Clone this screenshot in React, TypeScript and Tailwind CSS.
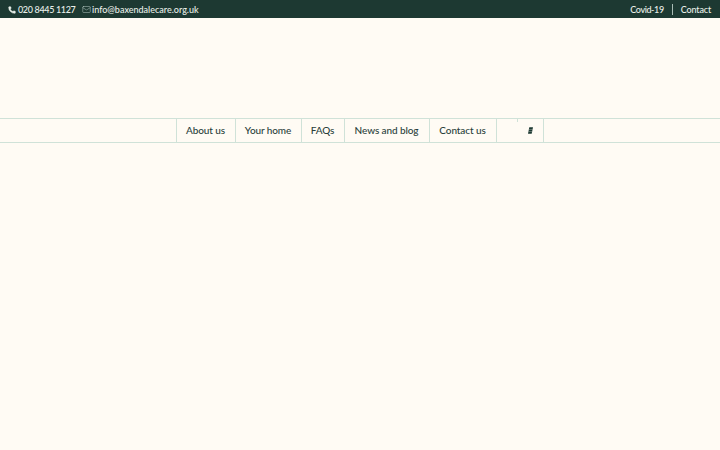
import { Mail, Phone } from "lucide-react";

const NAV_ITEMS = [
  { name: "About us", width: "w-[59px]" },
  { name: "Your home", width: "w-[66px]" },
  { name: "FAQs", width: "w-[43px]" },
  { name: "News and blog", width: "w-[85px]" },
  { name: "Contact us", width: "w-[67px]" },
];

export default function App() {
  return (
    <div className="min-h-[450px] bg-[#fffbf4] font-['Lato',sans-serif]">
      {/* Top bar */}
      <div className="flex h-[18px] items-center justify-between bg-[#1d3932] pl-2 pr-[9px] pt-px text-[9px] font-medium text-[#e9efe9]">
        <div className="flex items-center whitespace-nowrap">
          <Phone className="h-2 w-2 fill-current" strokeWidth={1.5} />
          <span className="ml-[2px] w-[57px] tracking-[-0.35px]">020 8445 1127</span>
          <Mail className="ml-[7px] h-[9px] w-[9px] text-[#a9bcb5]" strokeWidth={1.5} />
          <span className="ml-[1px]">info@baxendalecare.org.uk</span>
        </div>
        <div className="flex items-center whitespace-nowrap">
          <span className="tracking-[-0.4px]">Covid-19</span>
          <span className="mx-2 h-[11px] w-px bg-[#a9bcb5]" />
          <span className="tracking-[-0.15px]">Contact</span>
        </div>
      </div>

      {/* Logo space */}
      <div className="h-[100px]" />

      {/* Main nav */}
      <nav className="flex h-[25px] justify-center border-y border-[#d0e2d8] pr-px text-[10px] font-medium tracking-[-0.1px] text-[#2a3f3b]">
        <div className="flex border-l border-[#d0e2d8]">
          {NAV_ITEMS.map((item) => (
            <a key={item.name} className={`flex ${item.width} items-center justify-center border-r border-[#d0e2d8]`}>
              {item.name}
            </a>
          ))}
          <div className="relative flex w-[47px] items-center justify-end border-r border-[#d0e2d8] pr-[10px]">
            <span className="absolute left-[20px] top-0 h-[3px] w-px bg-[#d0e2d8]" />
            <svg viewBox="0 0 5 7" className="h-[7px] w-[5px] text-[#1d3932]">
              <path d="M1.3 0.3H5L3.7 6.7H0Z" fill="currentColor" />
              <path d="M1 2.5H4.5M0.7 4.5H4.2" stroke="#fffbf4" strokeWidth="0.3" />
            </svg>
          </div>
        </div>
      </nav>
    </div>
  );
}
